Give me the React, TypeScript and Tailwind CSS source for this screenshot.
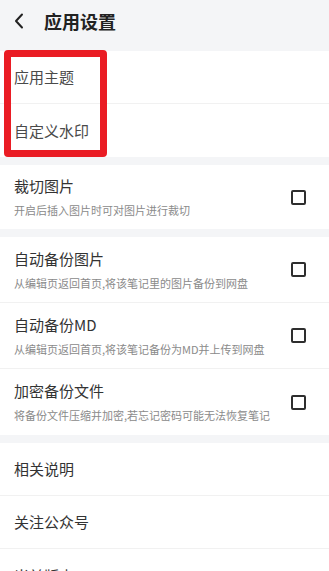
import React from "react";

const font = { fontFamily: '"Noto Sans CJK SC", "Noto Sans", sans-serif' };

const CHECK_ITEMS = [
  { title: "自动备份图片", desc: "从编辑页返回首页,将该笔记里的图片备份到网盘" },
  { title: "自动备份MD", desc: "从编辑页返回首页,将该笔记备份为MD并上传到网盘" },
  { title: "加密备份文件", desc: "将备份文件压缩并加密,若忘记密码可能无法恢复笔记" },
];

const Checkbox = () => (
  <div className="w-[15px] h-[15px] border-2 border-[#2e2e2e] rounded-[2px] shrink-0" />
);

const CheckRow = ({ title, desc, last }: { title: string; desc: string; last?: boolean }) => (
  <div
    className={`flex items-center justify-between pl-[14px] pr-[23px] h-[66px] ${
      last ? "" : "border-b border-[#f1f1f1]"
    }`}
  >
    <div className="flex flex-col">
      <span className="text-[15px] leading-[20px] text-[#333]">{title}</span>
      <span className="text-[11px] leading-[16px] text-[#8a8a8a] mt-[6px]">{desc}</span>
    </div>
    <Checkbox />
  </div>
);

const PlainRow = ({ label, last, color = "text-[#333]" }: { label: string; last?: boolean; color?: string }) => (
  <div
    className={`flex items-center h-[53px] pl-[14px] ${last ? "" : "border-b border-[#f1f1f1]"}`}
  >
    <span className={`text-[15px] leading-[20px] ${color}`}>{label}</span>
  </div>
);

export default function App() {
  return (
    <div className="w-[329px] h-[571px] overflow-hidden bg-[#f4f5f7]" style={font}>
      {/* header */}
      <div className="flex items-center h-[42px] pl-[14px] gap-[20px]">
        <svg width="10" height="16" viewBox="0 0 10 16" fill="none">
          <polyline points="8,1.5 2,8 8,14.5" stroke="#222" strokeWidth="2" strokeLinecap="round" strokeLinejoin="round" />
        </svg>
        <span className="text-[18px] font-bold text-[#222] leading-[24px]">应用设置</span>
      </div>

      <div className="flex flex-col gap-[8px] mt-[9px]">
        <div className="relative bg-white">
          <PlainRow label="应用主题" color="text-[#4a4a4a]" />
          <PlainRow label="自定义水印" color="text-[#4a4a4a]" last />
          <div className="absolute left-[4px] top-[-1px] w-[103px] h-[107px] border-[7px] border-[#ea1c24] rounded-[4px]" />
        </div>

        <div className="bg-white">
          <div className="flex items-center justify-between pl-[14px] pr-[23px] h-[64px]">
            <div className="flex flex-col">
              <span className="text-[15px] leading-[20px] text-[#333]">裁切图片</span>
              <span className="text-[11px] leading-[16px] text-[#8a8a8a] mt-[6px]">开启后插入图片时可对图片进行裁切</span>
            </div>
            <Checkbox />
          </div>
        </div>

        <div className="bg-white">
          {CHECK_ITEMS.map((item, i) => (
            <CheckRow key={item.title} title={item.title} desc={item.desc} last={i === CHECK_ITEMS.length - 1} />
          ))}
        </div>

        <div className="bg-white">
          <PlainRow label="相关说明" />
          <PlainRow label="关注公众号" />
          <div className="flex items-center justify-between h-[53px] pl-[14px] pr-[23px]">
            <span className="text-[15px] leading-[20px] text-[#333]">当前版本</span>
            <span className="text-[13px] text-[#999]">1.0.0</span>
          </div>
        </div>
      </div>
    </div>
  );
}
